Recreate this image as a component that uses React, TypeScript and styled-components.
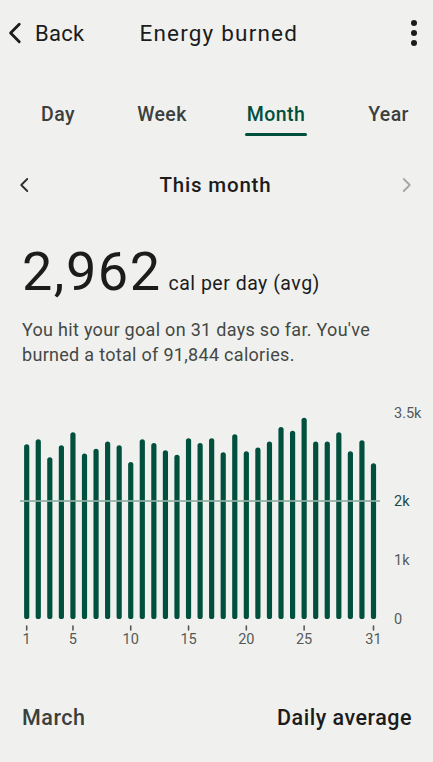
import React, { FC } from 'react';
import styled, { createGlobalStyle } from 'styled-components';

const GlobalStyle = createGlobalStyle`
  html, body {
    margin: 0;
    padding: 0;
    background: #f0f1ef;
  }
  body {
    font-family: Roboto, "Noto Sans", sans-serif;
    color: #1c1c1c;
  }
`;

const GREEN = '#00503d';

const calories = [
  2962, 3047, 2742, 2946, 3166, 2804, 2884, 3007, 2946, 2662, 3047, 2985, 2861, 2786, 3064, 2985,
  3064, 2827, 3132, 2844, 2905, 3007, 3255, 3192, 3413, 3007, 3007, 3166, 2844, 3030, 2640,
];

const StyledPage = styled.div`
  width: 433px;
  height: 762px;
  overflow: hidden;
  display: flex;
  flex-direction: column;
`;

const StyledHeader = styled.div`
  display: flex;
  align-items: center;
  height: 66px;
  padding: 0 14px 0 3px;
`;

const StyledBack = styled.div`
  display: flex;
  align-items: center;
  gap: 6px;
  font-size: 22px;
  letter-spacing: 0.3px;
  color: #1c1c1c;
`;

const StyledTitle = styled.div`
  flex: 1;
  text-align: center;
  font-size: 22.5px;
  letter-spacing: 1.2px;
  padding-right: 56px;
  color: #1c1c1c;
`;

const StyledTabs = styled.div`
  display: grid;
  grid-template-columns: 104px 104px 124px 101px;
  padding-left: 6px;
  margin-top: 37px;
  height: 44px;
`;

const StyledTab = styled.div<{ $active?: boolean }>`
  display: flex;
  flex-direction: column;
  align-items: center;
  font-size: 19.5px;
  letter-spacing: 0.4px;
  font-weight: 500;
  color: ${({ $active }) => ($active ? GREEN : '#3b403d')};
  &::after {
    content: '';
    display: block;
    margin-top: 7px;
    width: 62px;
    height: 3px;
    border-radius: 2px;
    background: ${({ $active }) => ($active ? GREEN : 'transparent')};
  }
`;

const StyledPeriod = styled.div`
  display: flex;
  align-items: center;
  justify-content: space-between;
  height: 36px;
  margin-top: 20px;
  padding: 0 18px 0 16px;
`;

const StyledPeriodLabel = styled.div`
  font-size: 20.5px;
  letter-spacing: 0.8px;
  font-weight: 500;
  color: #1c1c1c;
`;

const StyledSummary = styled.div`
  padding: 0 22px;
  margin-top: 34px;
`;

const StyledValueRow = styled.div`
  display: flex;
  align-items: baseline;
  gap: 7px;
`;

const StyledBigNumber = styled.span`
  font-size: 54px;
  font-weight: 400;
  letter-spacing: 1.5px;
  line-height: 70px;
  color: #1c1c1c;
`;

const StyledUnit = styled.span`
  font-size: 19.5px;
  letter-spacing: 0.5px;
  color: #1c1c1c;
`;

const StyledText = styled.p`
  margin: 10px 0 0;
  font-size: 18px;
  letter-spacing: 0.3px;
  line-height: 25px;
  color: #444845;
`;

const StyledChart = styled.svg`
  display: block;
  margin-top: 34px;
`;

const StyledFooter = styled.div`
  display: flex;
  justify-content: space-between;
  align-items: center;
  padding: 0 21px 0 22px;
  margin-top: 54px;
  font-size: 21.5px;
  letter-spacing: 0.5px;
`;

const StyledMonth = styled.span`
  color: #3b403d;
  font-weight: 500;
`;

const StyledAverage = styled.span`
  color: #1c1c1c;
  font-weight: 500;
`;

const Chevron: FC<{ dir: 'left' | 'right'; size: number; color: string; stroke: number }> = ({
  dir,
  size,
  color,
  stroke,
}) => (
  <svg width={size} height={size} viewBox="0 0 24 24" fill="none">
    <path
      d={dir === 'left' ? 'M15 4 L7 12 L15 20' : 'M9 4 L17 12 L9 20'}
      stroke={color}
      strokeWidth={stroke}
      strokeLinecap="round"
      strokeLinejoin="round"
    />
  </svg>
);

const Kebab: FC = () => (
  <svg width="10" height="30" viewBox="0 0 10 30">
    <circle cx="5" cy="5" r="3" fill="#1c1c1c" />
    <circle cx="5" cy="15" r="3" fill="#1c1c1c" />
    <circle cx="5" cy="25" r="3" fill="#1c1c1c" />
  </svg>
);

// chart geometry in local svg coords
const BASE = 218;
const PER_K = 59;
const X0 = 26.7;
const STEP = 11.56;
const ticks = [1, 5, 10, 15, 20, 25, 31];
const yLabels = [
  { t: '3.5k', v: 3.5, c: '#555a57' },
  { t: '2k', v: 2, c: '#1f4a3e' },
  { t: '1k', v: 1, c: '#555a57' },
  { t: '0', v: 0, c: '#555a57' },
];

const Chart: FC = () => (
  <StyledChart width={433} height={250} viewBox="0 0 433 250">
    {calories.map((cal, i) => {
      const h = (cal / 1000) * PER_K;
      return (
        <rect
          key={i}
          x={X0 + i * STEP - 2.6}
          y={BASE - h}
          width={5.2}
          height={h}
          rx={2.6}
          fill={GREEN}
        />
      );
    })}
    <line x1={20} x2={380} y1={BASE - 2 * PER_K} y2={BASE - 2 * PER_K} stroke="#8fb0a3" strokeWidth={2} opacity={0.85} />
    {yLabels.map((l) => (
      <text
        key={l.t}
        x={394}
        y={BASE - l.v * PER_K + 5}
        fontSize={14.5}
        fill={l.c}
        fontFamily="Roboto, sans-serif"
      >
        {l.t}
      </text>
    ))}
    {ticks.map((d) => {
      const x = X0 + (d - 1) * STEP;
      return (
        <g key={d}>
          <line x1={x} x2={x} y1={225} y2={229} stroke="#555a57" strokeWidth={1.6} strokeLinecap="round" />
          <text x={x} y={243} fontSize={14.5} fill="#555a57" textAnchor="middle" fontFamily="Roboto, sans-serif">
            {d}
          </text>
        </g>
      );
    })}
  </StyledChart>
);

const App: FC = () => (
  <StyledPage>
    <GlobalStyle />
    <StyledHeader>
      <StyledBack>
        <Chevron dir="left" size={26} color="#1c1c1c" stroke={2.6} />
        <span>Back</span>
      </StyledBack>
      <StyledTitle>Energy burned</StyledTitle>
      <Kebab />
    </StyledHeader>
    <StyledTabs>
      <StyledTab>Day</StyledTab>
      <StyledTab>Week</StyledTab>
      <StyledTab $active>Month</StyledTab>
      <StyledTab>Year</StyledTab>
    </StyledTabs>
    <StyledPeriod>
      <Chevron dir="left" size={18} color="#2a2e2c" stroke={2.4} />
      <StyledPeriodLabel>This month</StyledPeriodLabel>
      <Chevron dir="right" size={18} color="#a3a7a5" stroke={2.4} />
    </StyledPeriod>
    <StyledSummary>
      <StyledValueRow>
        <StyledBigNumber>2,962</StyledBigNumber>
        <StyledUnit>cal per day (avg)</StyledUnit>
      </StyledValueRow>
      <StyledText>
        You hit your goal on 31 days so far. You've burned a total of 91,844 calories.
      </StyledText>
    </StyledSummary>
    <Chart />
    <StyledFooter>
      <StyledMonth>March</StyledMonth>
      <StyledAverage>Daily average</StyledAverage>
    </StyledFooter>
  </StyledPage>
);

export default App;
